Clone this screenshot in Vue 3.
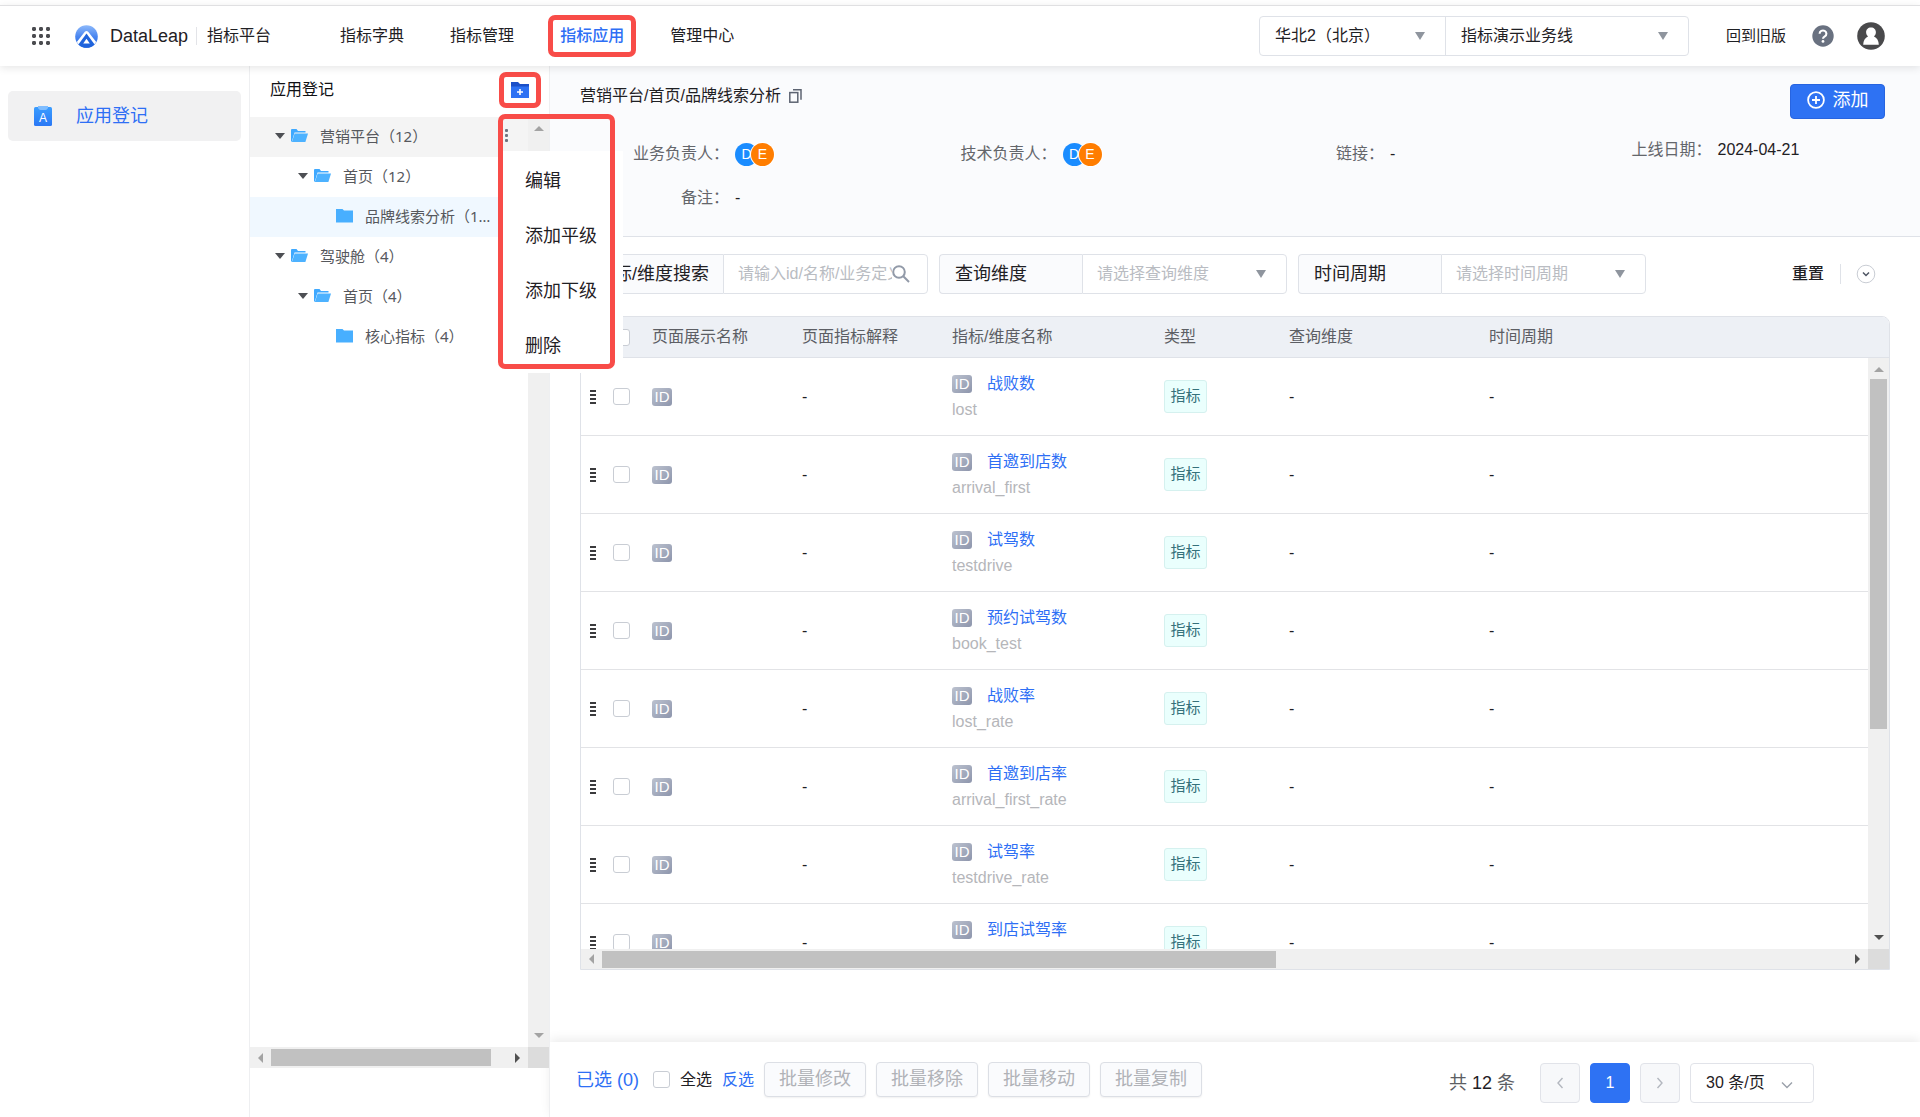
<script setup>
import { ref } from 'vue'

const navItems = [
  { label: '指标字典' },
  { label: '指标管理' },
  { label: '指标应用', active: true },
  { label: '管理中心' },
]

const tree = [
  { label: '营销平台（12）', level: 1, open: true, hover: true },
  { label: '首页（12）', level: 2, open: true },
  { label: '品牌线索分析（12）', level: 3, selected: true },
  { label: '驾驶舱（4）', level: 1, open: true },
  { label: '首页（4）', level: 2, open: true },
  { label: '核心指标（4）', level: 3 },
]

const menuItems = ['编辑', '添加平级', '添加下级', '删除']

const rows = [
  { name: '战败数', code: 'lost' },
  { name: '首邀到店数', code: 'arrival_first' },
  { name: '试驾数', code: 'testdrive' },
  { name: '预约试驾数', code: 'book_test' },
  { name: '战败率', code: 'lost_rate' },
  { name: '首邀到店率', code: 'arrival_first_rate' },
  { name: '试驾率', code: 'testdrive_rate' },
  { name: '到店试驾率', code: 'arrival_testdrive_rate' },
]

const batchActions = ['批量修改', '批量移除', '批量移动', '批量复制']
const keyword = ref('')
</script>

<template>
  <div class="app">
    <header class="topbar">
      <button class="apps" type="button" aria-label="应用列表">
        <svg width="18" height="18" viewBox="0 0 18 18" fill="#4a4b4f">
          <g v-for="y in 3" :key="y">
            <rect v-for="x in 3" :key="x" :x="(x - 1) * 7" :y="(y - 1) * 7" width="4" height="4" rx="1.4" />
          </g>
        </svg>
      </button>
      <svg class="logo" width="23" height="23" viewBox="0 0 23 23">
        <defs>
          <linearGradient id="lg" x1="0" y1="0" x2="0" y2="1">
            <stop offset="0" stop-color="#8db9fb" />
            <stop offset="0.5" stop-color="#4a86f0" />
            <stop offset="1" stop-color="#1f66e5" />
          </linearGradient>
        </defs>
        <circle cx="11.5" cy="11.5" r="11.3" fill="url(#lg)" />
        <path d="M1.8 17 L9.8 6.8 Q11.5 5 13.2 6.8 L21.2 17 L18.6 20.2 L11.5 10.6 L4.4 20.2 Z" fill="#fff" />
        <path d="M11.5 8.4 L19.6 19.4 A11.3 11.3 0 0 1 3.4 19.4 Z" fill="#1f63dc" />
        <path d="M11.5 13.8 L14.8 18.4 H8.2 Z" fill="#fff" />
      </svg>
      <span class="brand">DataLeap</span>
      <span class="product">指标平台</span>
      <nav class="nav">
        <a v-for="item in navItems" :key="item.label" href="#" :class="{ active: item.active }">
          {{ item.label }}<i v-if="item.active" class="mark mark-nav"></i>
        </a>
      </nav>
      <div class="scope">
        <div class="pick region">
          <select aria-label="地域"><option>华北2（北京）</option></select>
          <i class="tri"></i>
        </div>
        <div class="pick line">
          <select aria-label="业务线"><option>指标演示业务线</option></select>
          <i class="tri"></i>
        </div>
      </div>
      <a class="legacy" href="#">回到旧版</a>
      <button class="help" type="button" aria-label="帮助">
        <svg width="22" height="22" viewBox="0 0 22 22">
          <circle cx="11" cy="11" r="10.7" fill="#697180" />
          <path d="M7.6 8.7 a3.4 3.2 0 1 1 5.2 2.7 q-1.8 1.1 -1.8 2.4" fill="none" stroke="#fff" stroke-width="2.1" />
          <circle cx="11" cy="16.4" r="1.4" fill="#fff" />
        </svg>
      </button>
      <button class="avatar" type="button" aria-label="个人中心">
        <svg width="28" height="28" viewBox="0 0 28 28">
          <circle cx="14" cy="14" r="13.8" fill="#49494b" />
          <path d="M14 5.5 C17 5.5 18.9 7.6 18.9 10.3 C18.9 12.3 18 13.4 17 14.4 C19.8 15.6 21.8 18.5 21.8 22.7 H6.2 C6.2 18.5 8.2 15.6 11 14.4 C10 13.4 9.1 12.3 9.1 10.3 C9.1 7.6 11 5.5 14 5.5 Z" fill="#fff" />
        </svg>
      </button>
    </header>

    <div class="body">
      <aside class="side">
        <a class="side-item" href="#">
          <svg width="18" height="20" viewBox="0 0 18 20">
            <defs>
              <linearGradient id="sg" x1="0" y1="0" x2="0" y2="1">
                <stop offset="0" stop-color="#3a9dff" />
                <stop offset="1" stop-color="#2b78f5" />
              </linearGradient>
            </defs>
            <rect y="1" width="18" height="19" rx="1.5" fill="url(#sg)" />
            <path d="M4 0 H14 V2 Q13 4 11.5 4 H6.5 Q5 4 4 2 Z" fill="#7fbdff" />
            <text x="9" y="15.5" text-anchor="middle" font-size="12" fill="#fff" font-family="Liberation Sans, sans-serif">A</text>
          </svg>
          <span>应用登记</span>
        </a>
      </aside>

      <section class="tree">
        <div class="tree-head">
          <h2>应用登记</h2>
          <button class="add-folder" type="button" aria-label="新建目录">
            <svg width="18" height="16" viewBox="0 0 18 16">
              <path d="M0 0 H7 L9 2 H18 V8 H0 Z" fill="#1b50c8" />
              <path d="M0 4.5 H18 V16 H0 Z" fill="#2e72f3" />
              <path d="M9 7 V13 M6 10 H12" stroke="#fff" stroke-width="1.6" />
            </svg>
            <i class="mark mark-folder"></i>
          </button>
        </div>
        <div class="tree-scroll">
          <div class="tree-view">
            <ul class="nodes">
              <li
                v-for="(node, i) in tree"
                :key="i"
                :class="['node', 'lv' + node.level, { hover: node.hover, selected: node.selected }]"
              >
                <i v-if="node.open" class="caret"></i>
                <svg v-if="node.open" class="folder" width="17" height="14" viewBox="0 0 17 14">
                  <path d="M0 13 V1 Q0 0 1 0 H5.5 L7 2 H14.5 V3.5 H3.5 L1 12 Z" fill="#3fa9ff" />
                  <path d="M3.6 4.5 H17 L14.4 13 H0.9 Z" fill="#4db2ff" />
                </svg>
                <svg v-else class="folder" width="17" height="14" viewBox="0 0 17 14">
                  <path d="M0 0 H6.5 L8 1.6 H17 V13.5 H0 Z" fill="#48afff" />
                </svg>
                <span class="node-label">{{ node.label }}</span>
                <button v-if="node.hover" class="more" type="button" aria-label="更多操作">
                  <svg width="4" height="14" viewBox="0 0 4 14" fill="#6f7480">
                    <rect width="3" height="3" rx="1" /><rect y="5" width="3" height="3" rx="1" /><rect y="10" width="3" height="3" rx="1" />
                  </svg>
                </button>
              </li>
            </ul>
            <div class="sb sb-v"><i class="ar up"></i><i class="ar down"></i></div>
          </div>
          <div class="sb-row">
            <div class="sb sb-h"><i class="ar left"></i><span class="thumb tree-thumb"></span><i class="ar right dark"></i></div>
            <div class="corner"></div>
          </div>
        </div>
        <div class="menu">
          <button v-for="m in menuItems" :key="m" type="button">{{ m }}</button>
        </div>
        <i class="mark mark-menu"></i>
      </section>

      <main class="main">
        <section class="summary">
          <div class="summary-top">
            <div class="crumb">
              <span>营销平台/首页/品牌线索分析</span>
              <button class="copy" type="button" aria-label="复制路径">
                <svg width="13" height="14" viewBox="0 0 13 14" fill="none" stroke="#5d6472" stroke-width="1.5">
                  <rect x="0.8" y="3.6" width="8" height="9.6" /><path d="M4 0.8 H12 V10.8" />
                </svg>
              </button>
            </div>
            <button class="primary" type="button">
              <svg width="18" height="18" viewBox="0 0 18 18" fill="none" stroke="#fff" stroke-width="1.8">
                <circle cx="9" cy="9" r="7.9" /><path d="M9 5 V13 M5 9 H13" />
              </svg>
              <span>添加</span>
            </button>
          </div>
          <dl class="facts">
            <div class="fact">
              <dt>业务负责人：</dt>
              <dd class="people"><span class="p1">D</span><span class="p2">E</span></dd>
            </div>
            <div class="fact">
              <dt>技术负责人：</dt>
              <dd class="people"><span class="p1">D</span><span class="p2">E</span></dd>
            </div>
            <div class="fact"><dt>链接：</dt><dd>-</dd></div>
            <div class="fact date"><dt>上线日期：</dt><dd>2024-04-21</dd></div>
            <div class="fact"><dt>备注：</dt><dd>-</dd></div>
          </dl>
        </section>

        <form class="filters" @submit.prevent>
          <div class="field">
            <label for="kw">指标/维度搜索</label>
            <div class="control search">
              <input id="kw" v-model="keyword" type="text" placeholder="请输入id/名称/业务定义" />
              <svg width="18" height="18" viewBox="0 0 18 18" fill="none" stroke="#929aa8" stroke-width="2">
                <circle cx="7" cy="7" r="5.8" /><path d="M11.3 11.3 L17 17" />
              </svg>
            </div>
          </div>
          <div class="field">
            <label for="dim">查询维度</label>
            <div class="control">
              <select id="dim"><option>请选择查询维度</option></select>
              <i class="tri"></i>
            </div>
          </div>
          <div class="field">
            <label for="period">时间周期</label>
            <div class="control">
              <select id="period"><option>请选择时间周期</option></select>
              <i class="tri"></i>
            </div>
          </div>
          <button class="reset" type="reset">重置</button>
          <button class="expand" type="button" aria-label="展开筛选">
            <svg width="20" height="20" viewBox="0 0 20 20" fill="none">
              <circle cx="10" cy="10" r="8.8" stroke="#c9cdd4" /><path d="M7 8.5 L10 11.5 L13 8.5" stroke="#4e5563" stroke-width="1.5" />
            </svg>
          </button>
        </form>

        <section class="grid">
          <div class="grid-view">
            <div class="grid-clip">
              <table>
                <colgroup>
                  <col class="c-drag" /><col class="c-check" /><col class="c-show" /><col class="c-desc" />
                  <col class="c-name" /><col class="c-type" /><col class="c-dim" /><col />
                </colgroup>
                <thead>
                  <tr>
                    <th></th>
                    <th><input type="checkbox" aria-label="全选本页" /></th>
                    <th>页面展示名称</th>
                    <th>页面指标解释</th>
                    <th>指标/维度名称</th>
                    <th>类型</th>
                    <th>查询维度</th>
                    <th>时间周期</th>
                  </tr>
                </thead>
                <tbody>
                  <tr v-for="row in rows" :key="row.code">
                    <td>
                      <svg class="drag" width="6" height="14" viewBox="0 0 6 14" fill="#3b3b3d">
                        <rect width="6" height="2" /><rect y="4" width="6" height="2" /><rect y="8" width="6" height="2" /><rect y="12" width="6" height="2" />
                      </svg>
                    </td>
                    <td><input type="checkbox" :aria-label="row.name" /></td>
                    <td><span class="id">ID</span></td>
                    <td>-</td>
                    <td>
                      <div class="name"><span class="id">ID</span><a href="#">{{ row.name }}</a></div>
                      <div class="code">{{ row.code }}</div>
                    </td>
                    <td><span class="tag">指标</span></td>
                    <td>-</td>
                    <td>-</td>
                  </tr>
                </tbody>
              </table>
            </div>
            <div class="grid-rail">
              <div class="rail-head"></div>
              <div class="sb sb-v"><i class="ar up"></i><span class="thumb grid-thumb-v"></span><i class="ar down dark"></i></div>
            </div>
          </div>
          <div class="sb-row">
            <div class="sb sb-h"><i class="ar left"></i><span class="thumb grid-thumb-h"></span><i class="ar right dark"></i></div>
            <div class="corner"></div>
          </div>
        </section>

        <footer class="footer">
          <div class="batch">
            <span class="picked">已选 (0)</span>
            <input id="all" type="checkbox" />
            <label for="all">全选</label>
            <a href="#">反选</a>
            <button v-for="b in batchActions" :key="b" type="button" disabled>{{ b }}</button>
          </div>
          <div class="pager">
            <span class="total">共 <b>12</b> 条</span>
            <button type="button" disabled aria-label="上一页">
              <svg width="8" height="14" viewBox="0 0 8 14" fill="none" stroke="#b3b7bf" stroke-width="1.4"><path d="M6.5 2 L2 7 L6.5 12" /></svg>
            </button>
            <button type="button" class="current">1</button>
            <button type="button" disabled aria-label="下一页">
              <svg width="8" height="14" viewBox="0 0 8 14" fill="none" stroke="#b3b7bf" stroke-width="1.4"><path d="M1.5 2 L6 7 L1.5 12" /></svg>
            </button>
            <div class="size">
              <select aria-label="每页条数"><option>30 条/页</option></select>
              <svg width="12" height="8" viewBox="0 0 12 8" fill="none" stroke="#9aa0aa" stroke-width="1.4"><path d="M1 1.5 L6 6.5 L11 1.5" /></svg>
            </div>
          </div>
        </footer>
      </main>
    </div>
  </div>
</template>

<style>
body {
  margin: 0;
  background: #fff;
}
</style>

<style scoped>
.app {
  display: flex;
  flex-direction: column;
  height: 100vh;
  color: #1f2024;
  font: 16px/24px "Liberation Sans", "Noto Sans CJK SC", sans-serif;
}
.app * {
  box-sizing: border-box;
}
button, input, select {
  margin: 0;
  padding: 0;
  font: inherit;
  color: inherit;
}
button {
  border: 0;
  background: none;
  white-space: nowrap;
}
a {
  color: inherit;
  text-decoration: none;
}
svg {
  display: block;
  flex: none;
}
select {
  appearance: none;
  width: 100%;
  height: 100%;
  border: 0;
  background: none;
  outline: none;
}
input[type="checkbox"] {
  appearance: none;
  display: block;
  flex: none;
  width: 17px;
  height: 17px;
  border: 1px solid #c9cdd4;
  border-radius: 3px;
  background: #fff;
}
.mark {
  position: absolute;
  border: 5px solid #f84c48;
  border-radius: 7px;
  pointer-events: none;
}

/* top bar */
.topbar {
  position: relative;
  z-index: 5;
  display: flex;
  align-items: center;
  flex: none;
  height: 61px;
  margin-top: 5px;
  padding: 0 35px 0 32px;
  border-top: 1px solid #e0e0e2;
  background: #fff;
  box-shadow: 0 2px 8px rgba(0, 0, 0, 0.1);
}
.logo {
  margin-left: 25px;
}
.brand {
  margin: 0 8px 0 12px;
  font-size: 18px;
}
.product {
  padding-left: 10px;
  border-left: 1px solid #e3e4e8;
  line-height: 18px;
}
.nav {
  display: flex;
  gap: 46px;
  margin: 0 auto 0 69px;
}
.nav a {
  position: relative;
}
.nav .active {
  color: #2e6ff5;
  font-weight: 500;
}
.mark-nav {
  inset: -9px -12px;
}
.scope {
  display: flex;
  height: 40px;
  border: 1px solid #dfe2e8;
  border-radius: 4px;
}
.pick {
  position: relative;
}
.pick select {
  padding-left: 15px;
}
.region {
  width: 186px;
  border-right: 1px solid #dfe2e8;
}
.line {
  width: 242px;
}
.tri {
  position: absolute;
  right: 20px;
  top: 50%;
  margin-top: -4px;
  border: 5px solid transparent;
  border-top: 8px solid #8f959e;
  border-bottom: 0;
  pointer-events: none;
}
.legacy {
  margin: 0 26px 0 37px;
  font-size: 15px;
}
.avatar {
  margin-left: 23px;
}

/* left side */
.body {
  display: flex;
  flex: 1;
  min-height: 0;
}
.side {
  flex: none;
  width: 250px;
  padding: 25px 8px;
  border-right: 1px solid #eeeff1;
}
.side-item {
  display: flex;
  align-items: center;
  gap: 24px;
  height: 50px;
  padding-left: 26px;
  border-radius: 5px;
  background: #f1f1f2;
  color: #2e6ff5;
  font-size: 18px;
}

/* tree */
.tree {
  position: relative;
  z-index: 3;
  display: flex;
  flex-direction: column;
  flex: none;
  width: 300px;
  padding-bottom: 49px;
  border-right: 1px solid #eeeff1;
}
.tree-head {
  display: flex;
  align-items: center;
  justify-content: space-between;
  height: 51px;
  padding: 0 20px 3px;
}
h2 {
  margin: 0;
  font-size: 16px;
  font-weight: 400;
  color: #101114;
}
.add-folder {
  position: relative;
}
.mark-folder {
  inset: -10px -12px;
}
.tree-scroll {
  display: flex;
  flex-direction: column;
  flex: 1;
}
.tree-view {
  display: flex;
  flex: 1;
}
.nodes {
  flex: 1;
  min-width: 0;
  margin: 0;
  padding: 0;
  list-style: none;
}
.node {
  display: flex;
  align-items: center;
  height: 40px;
  padding: 0 0 2px 25px;
  font: 15px/24px "Noto Sans", "Noto Sans CJK SC", sans-serif;
  color: #56585d;
}
.node.lv2 {
  padding-left: 48px;
}
.node.lv3 {
  padding-left: 86px;
}
.node.hover {
  background: #f4f4f4;
}
.node.selected {
  background: #f0f8ff;
}
.caret {
  margin-right: 6px;
  border: 5px solid transparent;
  border-top: 6px solid #4d4f54;
  border-bottom: 0;
}
.folder {
  margin-right: 12px;
}
.node-label {
  max-width: 130px;
  overflow: hidden;
  white-space: nowrap;
  text-overflow: ellipsis;
}
.more {
  margin: 0 19px 0 auto;
}
.menu {
  position: absolute;
  top: 85px;
  left: 250px;
  width: 123px;
  padding-top: 2px;
  background: #fff;
}
.menu button {
  display: block;
  width: 100%;
  height: 55px;
  padding-left: 25px;
  text-align: left;
  font-size: 18px;
}
.mark-menu {
  top: 48px;
  left: 248px;
  width: 117px;
  height: 255px;
}

/* scroll bars */
.sb {
  display: flex;
  align-items: center;
  background: #f0f0f0;
}
.sb-v {
  flex-direction: column;
  flex: none;
  width: 21px;
  padding: 9px 0;
}
.sb-h {
  flex: 1;
  padding: 0 8px;
}
.sb-row {
  display: flex;
  flex: none;
  height: 21px;
}
.corner {
  width: 21px;
  background: #dcdcdc;
}
.ar {
  border: 5px solid transparent;
  color: #a3a3a3;
}
.ar.dark {
  color: #505050;
}
.up {
  border-top: 0;
  border-bottom-color: currentColor;
}
.down {
  margin-top: auto;
  border-bottom: 0;
  border-top-color: currentColor;
}
.left {
  border-left: 0;
  border-right-color: currentColor;
}
.right {
  margin-left: auto;
  border-right: 0;
  border-left-color: currentColor;
}
.thumb {
  background: #c1c1c1;
}
.tree-thumb {
  width: 220px;
  height: 17px;
  margin-left: 8px;
}
.grid-thumb-h {
  width: 53%;
  height: 17px;
  margin-left: 8px;
}
.grid-thumb-v {
  width: 17px;
  height: 61%;
  margin-top: 7px;
}

/* summary */
.main {
  display: flex;
  flex-direction: column;
  flex: 1;
  min-width: 0;
}
.summary {
  flex: none;
  padding: 18px 30px 22px;
  border-bottom: 1px solid #dfe2e8;
  background: #fafbfd;
}
.summary-top {
  display: flex;
  align-items: flex-start;
  justify-content: space-between;
  padding-right: 5px;
}
.crumb {
  display: flex;
  align-items: center;
  gap: 8px;
}
.primary {
  display: flex;
  align-items: center;
  justify-content: center;
  gap: 8px;
  width: 95px;
  height: 35px;
  padding-bottom: 3px;
  border: 1px solid #2764e0;
  border-radius: 4px;
  background: #2e72f3;
  color: #fff;
  font-size: 18px;
}
.facts {
  display: grid;
  grid-template-columns: repeat(4, 1fr);
  row-gap: 12px;
  margin: 19px 0 0;
  padding-bottom: 0;
}
.fact {
  display: flex;
  gap: 6px;
  line-height: 32px;
}
.fact.date {
  line-height: 24px;
}
.fact dt {
  width: 149px;
  text-align: right;
  color: #64666b;
}
.fact dd {
  margin: 0;
}
.people {
  display: flex;
  align-items: center;
}
.people span {
  width: 23px;
  height: 23px;
  border-radius: 50%;
  color: #fff;
  font-size: 14px;
  line-height: 22px;
  text-align: center;
}
.p1 {
  background: #1a8cff;
}
.p2 {
  margin-left: -7px;
  background: #ff7d00;
  box-shadow: 0 0 0 1px #fff;
}

/* filters */
.filters {
  display: flex;
  align-items: center;
  flex: none;
  gap: 11px;
  padding: 17px 44px 22px 30px;
}
.field {
  display: flex;
  width: 348px;
  height: 40px;
}
.field label {
  flex: none;
  width: 143px;
  padding-left: 15px;
  border: 1px solid #dfe2e8;
  border-right: 0;
  border-radius: 4px 0 0 4px;
  background: #fafbfd;
  font-size: 18px;
  line-height: 38px;
  white-space: nowrap;
}
.control {
  position: relative;
  flex: 1;
  min-width: 0;
  border: 1px solid #dfe2e8;
  border-radius: 0 4px 4px 0;
}
.control select {
  padding-left: 14px;
  color: #b9bcc2;
}
.search {
  display: flex;
  align-items: center;
  padding: 0 17px 0 14px;
}
.search input {
  flex: 1;
  min-width: 0;
  border: 0;
  outline: none;
}
.search input::placeholder {
  color: #b9bcc2;
}
.reset {
  margin-left: auto;
  font-weight: 500;
}
.expand {
  margin-left: 5px;
  padding-left: 15px;
  border-left: 1px solid #dfe2e8;
}

/* table */
.grid {
  display: flex;
  flex-direction: column;
  flex: 1;
  min-height: 0;
  margin: 0 30px 72px;
  border: 1px solid #dfe2e8;
  border-radius: 0 8px 0 0;
  overflow: hidden;
}
.grid-view {
  display: flex;
  flex: 1;
  min-height: 0;
}
.grid-clip {
  flex: 1;
  min-width: 0;
  overflow: hidden;
}
table {
  width: 100%;
  table-layout: fixed;
  border-collapse: separate;
  border-spacing: 0;
}
.c-drag { width: 32px; }
.c-check { width: 39px; }
.c-show { width: 150px; }
.c-desc { width: 150px; }
.c-name { width: 212px; }
.c-type { width: 125px; }
.c-dim { width: 200px; }
th {
  height: 41px;
  padding: 0;
  border-bottom: 1px solid #dfe2e8;
  background: #edf0f5;
  color: #5c5e64;
  font-weight: 400;
  text-align: left;
}
td {
  height: 78px;
  padding: 0;
  border-bottom: 1px solid #e2e3e6;
}
.drag {
  margin-left: 9px;
}
.id {
  display: block;
  width: 20px;
  height: 18px;
  border-radius: 3px;
  background: linear-gradient(135deg, #bcc2cf, #8d95ac);
  color: #fff;
  font-size: 15px;
  line-height: 18px;
  text-align: center;
}
.name {
  display: flex;
  align-items: center;
  gap: 15px;
  height: 26px;
  color: #2e6ff5;
}
.code {
  height: 26px;
  line-height: 26px;
  color: #b5b6ba;
  white-space: nowrap;
}
.tag {
  display: block;
  width: 43px;
  height: 33px;
  border: 1px solid #d5f1ef;
  border-radius: 3px;
  background: #eafffd;
  color: #35717b;
  font-size: 15px;
  line-height: 30px;
  text-align: center;
}
.grid-rail {
  display: flex;
  flex-direction: column;
}
.rail-head {
  flex: none;
  height: 41px;
  border-bottom: 1px solid #dfe2e8;
  background: #edf0f5;
}
.grid-rail .sb-v {
  flex: 1;
}
.grid .sb-row {
  height: 20px;
}

/* footer */
.footer {
  display: flex;
  align-items: flex-start;
  justify-content: space-between;
  flex: none;
  height: 75px;
  padding: 20px 106px 0 26px;
  background: #fff;
  box-shadow: 0 -3px 10px rgba(0, 0, 0, 0.08);
}
.batch {
  display: flex;
  align-items: center;
  gap: 10px;
}
.picked {
  margin-right: 4px;
  font-size: 18px;
}
.picked, .batch a {
  color: #2e6ff5;
}
.batch button {
  width: 102px;
  height: 35px;
  padding-bottom: 2px;
  border: 1px solid #dcdfe5;
  border-radius: 4px;
  background: #fafbfd;
  box-shadow: 0 1px 2px rgba(0, 0, 0, 0.06);
  color: #b0b2b7;
  font-size: 18px;
}
.pager {
  display: flex;
  align-items: center;
  gap: 10px;
  padding-top: 1px;
}
.total {
  margin-right: 15px;
  color: #5c5e64;
  font-size: 18px;
}
.total b {
  color: #1f2024;
  font-weight: 400;
}
.pager button {
  display: flex;
  align-items: center;
  justify-content: center;
  width: 40px;
  height: 40px;
  border: 1px solid #e1e3e9;
  border-radius: 4px;
  background: #f7f8fa;
}
.pager .current {
  border-color: #2e72f3;
  background: #2e72f3;
  color: #fff;
}
.size {
  position: relative;
  width: 124px;
  height: 40px;
  border: 1px solid #e1e3e9;
  border-radius: 4px;
}
.size select {
  padding-left: 15px;
}
.size svg {
  position: absolute;
  right: 20px;
  top: 17px;
  pointer-events: none;
}
</style>
